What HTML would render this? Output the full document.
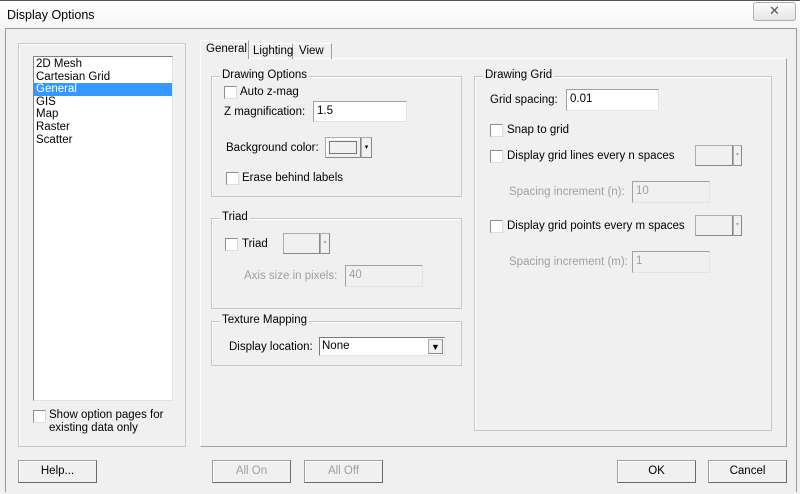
<!DOCTYPE html>
<html><head><style>
*{margin:0;padding:0;box-sizing:border-box}
body{width:800px;height:494px;background:#f0f0f0;font-family:"Liberation Sans",sans-serif;font-size:11.5px;color:#000;position:relative;overflow:hidden}
.a{position:absolute}
.t{position:absolute;white-space:nowrap}
.g{position:absolute;border:1px solid #c8c8c8;box-shadow:inset 1px 1px 0 #fff}
.gl{position:absolute;background:#f0f0f0;padding:0 2px;top:-8px;left:8px;white-space:nowrap}
.cb{position:absolute;width:13px;height:13px;background:#fff;border:1px solid #8f8f8f;border-right-color:#ddd;border-bottom-color:#ddd}
.ed{position:absolute;background:#fff;border:1px solid #a0a0a0;border-right-color:#e3e3e3;border-bottom-color:#e3e3e3;padding:3px 3px 0}
.ed.dis{background:#f0f0f0;color:#a0a0a0}
.dis{color:#a0a0a0}
.btn{position:absolute;height:23px;border:1px solid #a0a0a0;border-right-color:#696969;border-bottom-color:#696969;box-shadow:inset 1px 1px 0 #fff;text-align:center;line-height:21px;background:#f0f0f0}
.dd{position:absolute;border:1px solid #adadad;border-right-color:#888;border-bottom-color:#888;background:#f0f0f0}
</style></head><body>
<div class="a" style="left:0;top:0;width:800px;height:29px;background:linear-gradient(#fff,#f6f6f6);border-top:1px solid #555"></div>
<div class="t" style="left:7px;top:8px;font-size:12.5px">Display Options</div>
<div class="a" style="left:753px;top:2px;width:43px;height:19px;border:1px solid #b0b0b0;border-radius:3px;background:linear-gradient(#fafafa,#e6e6e6);text-align:center;font-size:13px;line-height:16px;color:#555">✕</div>
<div class="a" style="left:5px;top:28px;width:792px;height:464px;border:1px solid #999;border-bottom:none"></div>

<div class="a" style="left:18px;top:43px;width:168px;height:404px;border:1px solid #c8c8c8;box-shadow:inset 1px 1px 0 #fff"></div>
<div class="a" style="left:33px;top:56px;width:140px;height:345px;background:#fff;border:1px solid #828282;border-right-color:#e3e3e3;border-bottom-color:#e3e3e3"></div>
<div class="a" style="left:34px;top:83px;width:138px;height:13px;background:#3399ff"></div>
<div class="t" style="left:36px;top:58px;line-height:12.6px">2D Mesh<br>Cartesian Grid<br><span style="color:#fff">General</span><br>GIS<br>Map<br>Raster<br>Scatter</div>
<div class="cb" style="left:33px;top:410px"></div>
<div class="t" style="left:49px;top:409px;line-height:13px">Show option pages for<br>existing data only</div>

<div class="a" style="left:200px;top:58px;width:587px;height:389px;border:1px solid #fff;border-right-color:#a0a0a0;border-bottom-color:#a0a0a0"></div>
<div class="a" style="left:200px;top:40px;width:49px;height:19px;border:1px solid #fff;border-bottom:none;border-right-color:#a0a0a0;background:#f0f0f0"></div>
<div class="t" style="left:206px;top:43px">General</div>
<div class="a" style="left:250px;top:43px;width:43px;height:16px;border-right:1px solid #a0a0a0;border-top:1px solid #fff"></div>
<div class="t" style="left:253px;top:45px">Lighting</div>
<div class="a" style="left:293px;top:43px;width:39px;height:16px;border-right:1px solid #a0a0a0;border-top:1px solid #fff"></div>
<div class="t" style="left:299px;top:45px">View</div>

<div class="g" style="left:211px;top:76px;width:251px;height:121px"><div class="gl">Drawing Options</div></div>
<div class="cb" style="left:224px;top:86px"></div>
<div class="t" style="left:240px;top:86px">Auto z-mag</div>
<div class="t" style="left:224px;top:106px">Z magnification:</div>
<div class="ed" style="left:313px;top:101px;width:94px;height:21px">1.5</div>
<div class="t" style="left:226px;top:142px">Background color:</div>
<div class="dd" style="left:325px;top:137px;width:36px;height:21px;box-shadow:inset 2px 2px 0 #fff"><div class="a" style="left:3px;top:3px;width:28px;height:13px;border:1px solid #777;background:#f0f0f0"></div></div>
<div class="dd" style="left:361px;top:137px;width:11px;height:21px;text-align:center;font-size:7px;line-height:19px">▾</div>
<div class="cb" style="left:226px;top:172px"></div>
<div class="t" style="left:242px;top:172px">Erase behind labels</div>

<div class="g" style="left:211px;top:218px;width:251px;height:91px"><div class="gl">Triad</div></div>
<div class="cb" style="left:225px;top:238px"></div>
<div class="t" style="left:242px;top:238px">Triad</div>
<div class="dd" style="left:283px;top:233px;width:37px;height:21px"></div>
<div class="dd" style="left:320px;top:233px;width:10px;height:21px;text-align:center;font-size:6px;line-height:19px;color:#aaa">▾</div>
<div class="t dis" style="left:244px;top:270px">Axis size in pixels:</div>
<div class="ed dis" style="left:345px;top:265px;width:78px;height:22px">40</div>

<div class="g" style="left:211px;top:321px;width:251px;height:45px"><div class="gl">Texture Mapping</div></div>
<div class="t" style="left:229px;top:341px">Display location:</div>
<div class="ed" style="left:319px;top:337px;width:126px;height:19px;border-color:#7a7a7a #e3e3e3 #e3e3e3 #7a7a7a;padding:2px 2px 0">None</div>
<div class="dd" style="left:428px;top:339px;width:15px;height:15px;text-align:center;font-size:9px;line-height:14px">▼</div>

<div class="g" style="left:474px;top:76px;width:298px;height:355px"><div class="gl">Drawing Grid</div></div>
<div class="t" style="left:490px;top:94px">Grid spacing:</div>
<div class="ed" style="left:566px;top:89px;width:93px;height:22px">0.01</div>
<div class="cb" style="left:490px;top:124px"></div>
<div class="t" style="left:507px;top:124px">Snap to grid</div>
<div class="cb" style="left:490px;top:150px"></div>
<div class="t" style="left:507px;top:150px">Display grid lines every n spaces</div>
<div class="dd" style="left:695px;top:145px;width:38px;height:21px"></div>
<div class="dd" style="left:733px;top:145px;width:9px;height:21px;font-size:6px;line-height:19px;text-align:center;color:#aaa">▾</div>
<div class="t dis" style="left:509px;top:186px">Spacing increment (n):</div>
<div class="ed dis" style="left:632px;top:181px;width:78px;height:22px">10</div>
<div class="cb" style="left:490px;top:220px"></div>
<div class="t" style="left:507px;top:220px">Display grid points every m spaces</div>
<div class="dd" style="left:695px;top:215px;width:38px;height:21px"></div>
<div class="dd" style="left:733px;top:215px;width:9px;height:21px;font-size:6px;line-height:19px;text-align:center;color:#aaa">▾</div>
<div class="t dis" style="left:509px;top:256px">Spacing increment (m):</div>
<div class="ed dis" style="left:632px;top:251px;width:78px;height:22px">1</div>

<div class="btn" style="left:18px;top:460px;width:79px">Help...</div>
<div class="btn dis" style="left:212px;top:460px;width:79px">All On</div>
<div class="btn dis" style="left:304px;top:460px;width:79px">All Off</div>
<div class="btn" style="left:617px;top:460px;width:79px">OK</div>
<div class="btn" style="left:708px;top:460px;width:79px">Cancel</div>
</body></html>
